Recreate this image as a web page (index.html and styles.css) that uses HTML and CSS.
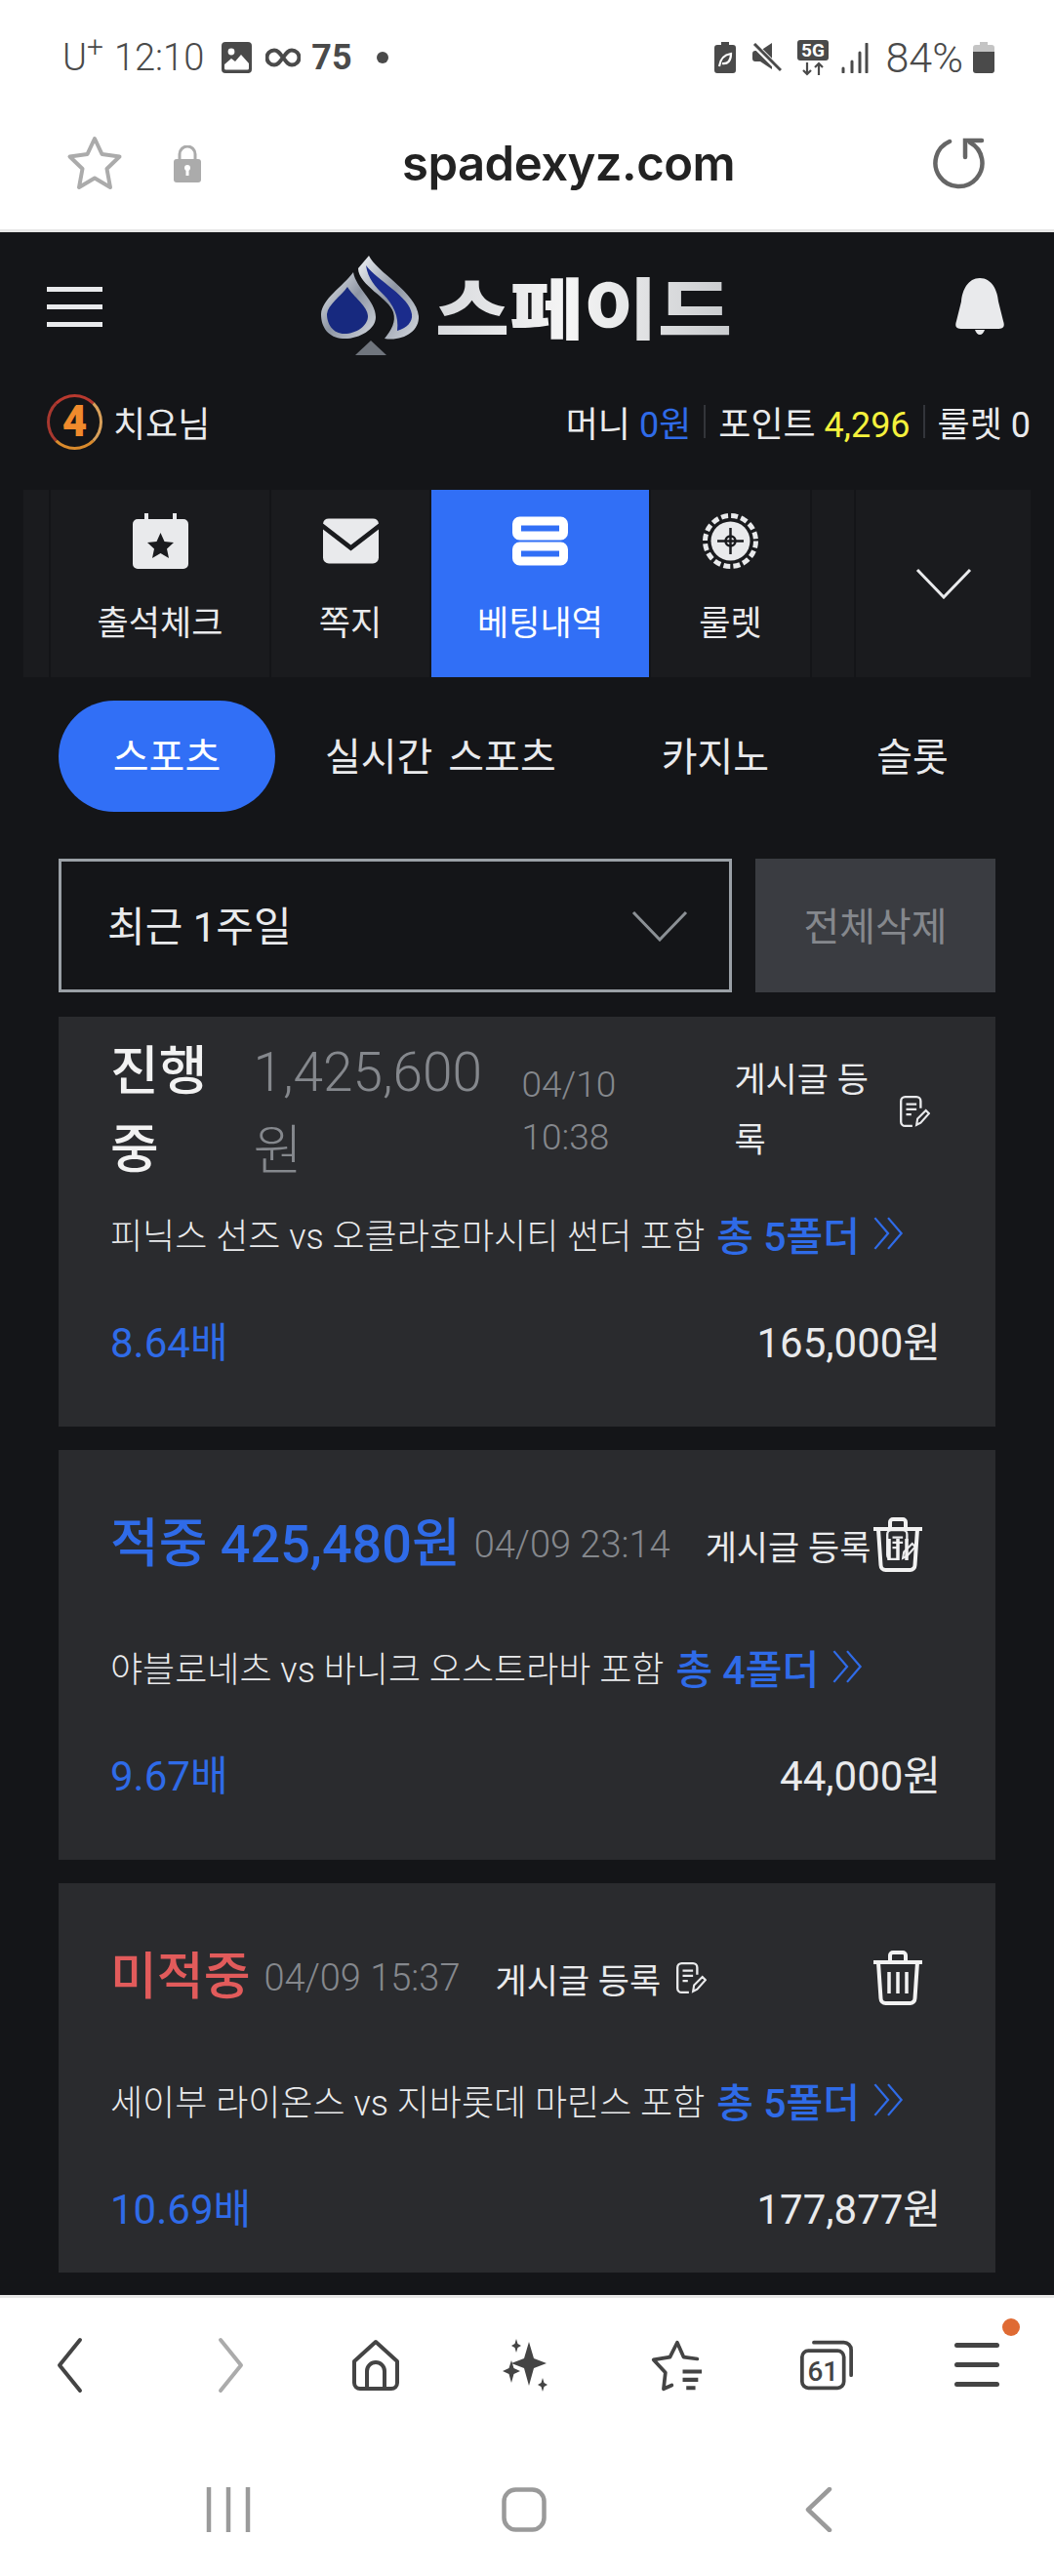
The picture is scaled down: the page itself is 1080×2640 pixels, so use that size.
FILE: index.html
```html
<!DOCTYPE html>
<html lang="ko">
<head>
    <meta charset="UTF-8">
    <meta name="viewport" content="width=device-width, initial-scale=1.0">
    <title>스페이드 베팅내역</title>
    <link rel="stylesheet" href="styles.css">
</head>
<body>
    <div class="status-bar">
        <div class="status-left">
            <span class="carrier">U<sup>+</sup></span>
            <span class="clock">12:10</span>
            <svg class="ic-photo" viewBox="0 0 31 32"><rect width="31" height="32" rx="4" fill="#4a4a4a"/><circle cx="10" cy="10" r="3.4" fill="#fff"/><path d="M3 23l7-6 4 3 6-7 8 9v5a1.5 1.5 0 0 1-1.500 1.500H4.500A1.500 1.500 0 0 1 3 27z" fill="#fff"/></svg>
            <svg class="ic-inf" viewBox="0 0 36 20"><path d="M18 10c-3-4-5-7.500-9-7.500a7.500 7.500 0 0 0 0 15c4 0 6-3.500 9-7.500s5-7.500 9-7.500a7.500 7.500 0 0 1 0 15c-4 0-6-3.500-9-7.500z" fill="none" stroke="#4a4a4a" stroke-width="4"/></svg>
            <b class="temp">75</b>
            <i class="status-dot"></i>
        </div>
        <div class="status-right">
            <svg class="ic-leaf" viewBox="0 0 22 32"><path d="M7 0h8v3h4a3 3 0 0 1 3 3v23a3 3 0 0 1-3 3H3a3 3 0 0 1-3-3V6a3 3 0 0 1 3-3h4z" fill="#4a4a4a"/><path d="M5 25c1-8 5-12 12-13 0 7-3 11-9 10" fill="none" stroke="#fff" stroke-width="2.200"/></svg>
            <svg class="ic-mute" viewBox="0 0 30 30"><path d="M0 11a3 3 0 0 1 3-3h5l12-8v27L8 19H3a3 3 0 0 1-3-3z" fill="#4a4a4a"/><path d="M2 2l27 27" stroke="#fff" stroke-width="6"/><path d="M2 1l27 27" stroke="#4a4a4a" stroke-width="3"/></svg>
            <svg class="ic-5g" viewBox="0 0 32 37"><rect width="32" height="21" rx="3" fill="#4a4a4a"/><text x="16" y="17" text-anchor="middle" class="ic-5g-text">5G</text><path d="M10 23v12M6 31l4 4 4-4M22 36V24M18 28l4-4 4 4" fill="none" stroke="#4a4a4a" stroke-width="2.200"/></svg>
            <svg class="ic-signal" viewBox="0 0 28 31"><path d="M2 26v4M11 19v11M19 10v20M26 1v29" stroke="#4a4a4a" stroke-width="3" stroke-linecap="round"/></svg>
            <span class="battery-text">84%</span>
            <svg class="ic-batt" viewBox="0 0 22 32"><path d="M7 0h8v3h4a3 3 0 0 1 3 3v5H0V6a3 3 0 0 1 3-3h4z" fill="#c4c4c4"/><path d="M0 10h22v19a3 3 0 0 1-3 3H3a3 3 0 0 1-3-3z" fill="#4a4a4a"/></svg>
        </div>
    </div>

    <div class="url-bar">
        <svg class="ic-star" viewBox="0 0 58 58"><path d="M29 3l7.500 16 18 2.500-13 12.500 3.500 19-16-9.500-16 9.500 3.500-19-13-12.500 18-2.500z" fill="none" stroke="#ababab" stroke-width="4" stroke-linejoin="round"/></svg>
        <svg class="ic-lock" viewBox="0 0 28 38"><path d="M6 16V9a8 8 0 0 1 16 0v7" fill="none" stroke="#ababab" stroke-width="3"/><rect y="14" width="28" height="24" rx="3" fill="#ababab"/><circle cx="14" cy="23" r="3" fill="#fff"/><rect x="12.500" y="24" width="3" height="7" fill="#fff"/></svg>
        <span class="url-text">spadexyz.com</span>
        <svg class="ic-reload" viewBox="0 0 54 54"><path d="M17 4a24 24 0 1 0 21 1" fill="none" stroke="#666" stroke-width="4.500" stroke-linecap="round"/><path d="M33 20V3h17" fill="none" stroke="#666" stroke-width="4.500" stroke-linecap="round"/></svg>
    </div>

    <div class="page">
        <header class="site-header">
            <div class="burger"><i></i><i></i><i></i></div>
            <div class="logo">
                <svg class="logo-mark" viewBox="0 0 104 104">
                    <defs>
                        <linearGradient id="steel" x1="0" y1="0" x2="1" y2="1"><stop offset="0" stop-color="#f1f3f6"/><stop offset="0.5" stop-color="#8d95a3"/><stop offset="1" stop-color="#d5d9df"/></linearGradient>
                    </defs>
                    <path d="M51 0C58 16 100 38 102 62C103 78 85 88 67 85C74 76 79 68 76 58C72 44 40 30 40 13Z" fill="url(#steel)"/>
                    <path d="M48 10C60 26 93 42 95 60C96 68 90 74 80 77C82 62 76 50 66 40C58 32 50 24 48 10Z" fill="#1b2c8c"/>
                    <path d="M35 17C38 34 58 46 58 63C58 76 40 86 24 85C10 84 2 74 2 60C3 44 24 32 35 17Z" fill="url(#steel)"/>
                    <path d="M29 32C35 42 50 52 50 62C50 72 38 80 26 80C14 80 8 70 8 60C9 50 22 42 29 32Z" fill="#17297f"/>
                    <path d="M53 87l16 15H37z" fill="#70757d"/>
                </svg>
                <span class="logo-text">스페이드</span>
            </div>
            <svg class="ic-bell" viewBox="0 0 52 58"><path d="M26 0C38 0 44 12 45 24L50 44C52 50 50 52 44 52H8C2 52 0 50 2 44L7 24C8 12 14 0 26 0z" fill="#e9eaec"/><path d="M21 53h10c-1 3-3 5-5 5s-4-2-5-5z" fill="#e9eaec"/></svg>
        </header>

        <div class="user-row">
            <div class="user-name">
                <span class="level"><b>4</b></span>
                <span>치요님</span>
            </div>
            <div class="wallet">
                <span>머니 <em class="blue">0원</em></span>
                <i class="wallet-sep"></i>
                <span>포인트 <em class="yellow">4,296</em></span>
                <i class="wallet-sep"></i>
                <span>룰렛 0</span>
            </div>
        </div>

        <nav class="menu-tabs">
            <div class="menu-tab"></div>
            <div class="menu-tab">
                <svg class="menu-icon" viewBox="0 0 57 57"><path d="M12 0h4v6h25V0h4v6h7a5 5 0 0 1 5 5v41a5 5 0 0 1-5 5H5a5 5 0 0 1-5-5V11a5 5 0 0 1 5-5h7z" fill="#e9eaec"/><path d="M28.500 20l4 9 9.500 1-7 6.500 2 9.500-8.500-5-8.500 5 2-9.500-7-6.500 9.500-1z" fill="#1a1b1e"/></svg>
                <span>출석체크</span>
            </div>
            <div class="menu-tab">
                <svg class="menu-icon" viewBox="0 0 57 46"><path d="M6 0h45a6 6 0 0 1 6 5L28.500 27 0 5a6 6 0 0 1 6-5z" fill="#e9eaec"/><path d="M0 11l28.500 22L57 11v29a6 6 0 0 1-6 6H6a6 6 0 0 1-6-6z" fill="#e9eaec"/></svg>
                <span>쪽지</span>
            </div>
            <div class="menu-tab active">
                <svg class="menu-icon" viewBox="0 0 57 50"><rect x="4.500" y="4.500" width="48" height="15" rx="3" fill="none" stroke="#fff" stroke-width="9"/><rect x="4.500" y="30.500" width="48" height="15" rx="3" fill="none" stroke="#fff" stroke-width="9"/></svg>
                <span>베팅내역</span>
            </div>
            <div class="menu-tab">
                <svg class="menu-icon" viewBox="0 0 57 57"><circle cx="28.500" cy="28.500" r="26" fill="none" stroke="#e9eaec" stroke-width="5" stroke-dasharray="7 3.200"/><circle cx="28.500" cy="28.500" r="20" fill="#e9eaec"/><path d="M28.500 15v27M15 28.500h27" stroke="#1a1b1e" stroke-width="2.500"/><circle cx="28.500" cy="28.500" r="5" fill="none" stroke="#1a1b1e" stroke-width="2.500"/></svg>
                <span>룰렛</span>
            </div>
            <div class="menu-tab"></div>
            <div class="menu-tab more">
                <svg class="chevron" viewBox="0 0 58 32"><path d="M2 2l27 28L56 2" fill="none" stroke="#e9eaec" stroke-width="3"/></svg>
            </div>
        </nav>

        <div class="game-tabs">
            <span class="game-tab active">스포츠</span>
            <span class="game-tab live">실시간 스포츠</span>
            <span class="game-tab casino">카지노</span>
            <span class="game-tab slot">슬롯</span>
        </div>

        <div class="filter-row">
            <div class="period">
                <span>최근 1주일</span>
                <svg class="chevron" viewBox="0 0 58 32"><path d="M2 2l27 28L56 2" fill="none" stroke="#8b9095" stroke-width="3"/></svg>
            </div>
            <div class="delete-all">전체삭제</div>
        </div>

        <div class="bet-list">
            <article class="bet-card">
                <div class="bet-head">
                    <span class="bet-state white">진행<br>중</span>
                    <span class="bet-amount">1,425,600<br>원</span>
                    <span class="bet-date two-line">04/10<br>10:38</span>
                    <span class="bet-post wrapped">게시글 등<br>록</span>
                    <svg class="ic-post" viewBox="1 0 30 32"><use href="#post-icon"/></svg>
                </div>
                <p class="bet-desc">피닉스 선즈 vs 오클라호마시티 썬더 포함 <a class="fold">총 5폴더 <svg class="ic-more" viewBox="0 0 30 30"><use href="#more-icon"/></svg></a></p>
                <div class="bet-foot">
                    <span class="odds">8.64배</span>
                    <span class="stake">165,000원</span>
                </div>
            </article>

            <article class="bet-card">
                <div class="bet-head">
                    <span class="bet-state blue">적중 425,480원</span>
                    <span class="bet-date">04/09 23:14</span>
                    <span class="bet-post">게시글 등록</span>
                    <svg class="ic-post" viewBox="1 0 30 32"><use href="#post-icon"/></svg>
                </div>
                <svg class="ic-trash" viewBox="0 0 54 58"><use href="#trash-icon"/></svg>
                <p class="bet-desc">야블로네츠 vs 바니크 오스트라바 포함 <a class="fold">총 4폴더 <svg class="ic-more" viewBox="0 0 30 30"><use href="#more-icon"/></svg></a></p>
                <div class="bet-foot">
                    <span class="odds">9.67배</span>
                    <span class="stake">44,000원</span>
                </div>
            </article>

            <article class="bet-card last">
                <div class="bet-head">
                    <span class="bet-state red">미적중</span>
                    <span class="bet-date">04/09 15:37</span>
                    <span class="bet-post">게시글 등록</span>
                    <svg class="ic-post" viewBox="1 0 30 32"><use href="#post-icon"/></svg>
                </div>
                <svg class="ic-trash" viewBox="0 0 54 58"><use href="#trash-icon"/></svg>
                <p class="bet-desc">세이부 라이온스 vs 지바롯데 마린스 포함 <a class="fold">총 5폴더 <svg class="ic-more" viewBox="0 0 30 30"><use href="#more-icon"/></svg></a></p>
                <div class="bet-foot">
                    <span class="odds">10.69배</span>
                    <span class="stake">177,877원</span>
                </div>
            </article>
        </div>
    </div>

    <div class="browser-nav">
        <svg viewBox="0 0 54 54"><path d="M36 1L15 27l21 26" transform="translate(-4 0)" fill="none" stroke="#444" stroke-width="4" stroke-linecap="round" stroke-linejoin="round"/></svg>
        <svg viewBox="0 0 54 54"><path d="M18 1l21 26-21 26" transform="translate(4 0)" fill="none" stroke="#ababab" stroke-width="4" stroke-linecap="round" stroke-linejoin="round"/></svg>
        <svg viewBox="0 0 54 54"><path d="M5 23L27 3l22 20v22a6 6 0 0 1-6 6H11a6 6 0 0 1-6-6z" fill="none" stroke="#444" stroke-width="4" stroke-linejoin="round"/><path d="M18 51V33a9 9 0 0 1 18 0v18" fill="none" stroke="#444" stroke-width="4"/></svg>
        <svg viewBox="0 0 54 54"><path d="M30 3l5 17 13 5-13 5-5 18-5-18-13-5 13-5zM12 22l2.500 8 6.500 3-6.500 3-2.500 9-2.500-9-6.500-3 6.500-3zM17 0l1.500 5 3.500 2-3.500 2L17 14l-1.500-5-3.500-2 3.500-2zM44 40l1.500 5 3.500 2-3.500 2-1.500 5-1.500-5-3.500-2 3.500-2z" fill="#444"/></svg>
        <svg viewBox="0 0 58 54"><path d="M24 49l-9 4 2-18L4 21l18-3 8-16 7 16 15 2" fill="none" stroke="#444" stroke-width="4" stroke-linecap="round" stroke-linejoin="round"/><path d="M36 34h21M36 43h17M40 52h10" stroke="#444" stroke-width="4.500"/></svg>
        <svg viewBox="0 0 58 54"><rect x="2" y="11" width="46" height="41" rx="7" fill="none" stroke="#444" stroke-width="4"/><path d="M15 2h33a8 8 0 0 1 8 8v28" fill="none" stroke="#444" stroke-width="4" stroke-linecap="round"/><text x="25" y="44" text-anchor="middle" class="tab-count">61</text></svg>
        <div class="nav-menu">
            <i></i><i></i><i></i>
            <span class="nav-badge"></span>
        </div>
    </div>

    <div class="system-nav">
        <svg viewBox="0 0 46 46"><path d="M3 0v46M23 0v46M43 0v46" stroke="#9a9a9a" stroke-width="4.500"/></svg>
        <svg viewBox="0 0 46 46"><rect x="2.500" y="2.500" width="41" height="41" rx="12" fill="none" stroke="#9a9a9a" stroke-width="4.500"/></svg>
        <svg viewBox="0 0 46 46"><path d="M33 2L11 23l22 21" fill="none" stroke="#9a9a9a" stroke-width="4.500" stroke-linecap="round" stroke-linejoin="round"/></svg>
    </div>

    <svg class="icon-defs">
        <defs>
            <g id="post-icon">
                <path d="M22 13V6a4 4 0 0 0-4-4H7a4 4 0 0 0-4 4v20a4 4 0 0 0 4 4h7" fill="none" stroke="#e9eaec" stroke-width="2.200"/>
                <path d="M8 9h10M8 14h10M8 19h5" stroke="#e9eaec" stroke-width="2.200"/>
                <path d="M18 29l1-6 8-8 3 3-8 9z" fill="none" stroke="#e9eaec" stroke-width="2"/>
            </g>
            <g id="more-icon">
                <path d="M3 1l12 14L3 29M15 1l12 14-12 14" fill="none" stroke="#2f6be8" stroke-width="2"/>
            </g>
            <g id="trash-icon">
                <path d="M2 13h50M19 12V6a3 3 0 0 1 3-3h10a3 3 0 0 1 3 3v6" fill="none" stroke="#f2f2f2" stroke-width="4"/>
                <path d="M7 13l2.500 37a5 5 0 0 0 5 5h25a5 5 0 0 0 5-5L47 13" fill="none" stroke="#f2f2f2" stroke-width="4"/>
                <path d="M18 23v22M27 23v22M36 23v22" stroke="#f2f2f2" stroke-width="3.500"/>
            </g>
        </defs>
    </svg>
</body>
</html>
```

FILE: styles.css
```css
* {
    box-sizing: border-box;
}
body {
    margin: 0;
    width: 1080px;
    height: 2640px;
    overflow: hidden;
    background-color: #fff;
    color: #e9eaec;
    font-family: Roboto, "Noto Sans CJK KR", sans-serif;
}
em {
    font-style: normal;
}

/* phone status bar */
.status-bar {
    height: 112px;
    padding: 6px 61px 0 64px;
    display: flex;
    justify-content: space-between;
    align-items: center;
    color: #4a4a4a;
    font-size: 38px;
    font-weight: 300;
}
.status-left,
.status-right {
    display: flex;
    align-items: center;
}
.carrier sup {
    font-size: 30px;
    line-height: 0;
}
.clock {
    margin-left: 11px;
}
.ic-photo {
    width: 31px;
    height: 32px;
    margin-left: 18px;
}
.ic-inf {
    width: 36px;
    height: 20px;
    margin-left: 14px;
}
.temp {
    margin-left: 11px;
    font-size: 36px;
    font-weight: 700;
}
.status-dot {
    width: 12px;
    height: 12px;
    margin-left: 25px;
    border-radius: 50%;
    background-color: #4a4a4a;
}
.ic-leaf {
    width: 22px;
    height: 32px;
}
.ic-mute {
    width: 30px;
    height: 30px;
    margin-left: 17px;
}
.ic-5g {
    width: 32px;
    height: 37px;
    margin-left: 16px;
}
.ic-5g-text {
    font-size: 19px;
    font-weight: 700;
    fill: #fff;
}
.ic-signal {
    width: 28px;
    height: 31px;
    margin-left: 13px;
}
.battery-text {
    margin-left: 18px;
    font-size: 43px;
}
.ic-batt {
    width: 22px;
    height: 32px;
    margin-left: 10px;
}

/* browser address bar */
.url-bar {
    height: 126px;
    padding: 0 70px 12px 68px;
    display: flex;
    align-items: center;
    border-bottom: 3px solid #e6e6e6;
    color: #222;
}
.ic-star {
    width: 58px;
    height: 58px;
}
.ic-lock {
    width: 28px;
    height: 38px;
    margin-left: 52px;
}
.url-text {
    margin-left: 206px;
    font-family: Inter, sans-serif;
    font-size: 49px;
    font-weight: 600;
    letter-spacing: -0.5px;
}
.ic-reload {
    width: 54px;
    height: 54px;
    margin-left: auto;
}

/* site */
.page {
    height: 2114px;
    background-color: #141518;
    overflow: hidden;
}
.site-header {
    height: 152px;
    padding: 0 50px 0 48px;
    display: flex;
    align-items: center;
    justify-content: space-between;
}
.burger {
    width: 57px;
    display: flex;
    flex-direction: column;
    gap: 13px;
}
.burger i {
    height: 5px;
    background-color: #e9eaec;
}
.logo {
    width: 424px;
    margin-right: 6px;
    display: flex;
    align-items: center;
    gap: 15px;
}
.logo-mark {
    width: 104px;
    height: 104px;
}
.logo-text {
    font-family: "Noto Sans CJK KR", sans-serif;
    font-size: 70px;
    font-weight: 900;
    line-height: 1;
    white-space: nowrap;
    transform: scaleX(1.18);
    transform-origin: left center;
    background: linear-gradient(90deg, #d8dadd, #f5f5f5 45%, #c9cbce);
    -webkit-background-clip: text;
    background-clip: text;
    color: transparent;
}
.ic-bell {
    width: 52px;
    height: 58px;
}
.user-row {
    height: 84px;
    padding: 0 24px 0 48px;
    display: flex;
    align-items: center;
    justify-content: space-between;
    font-size: 36px;
}
.user-name {
    display: flex;
    align-items: center;
    gap: 11px;
}
.level {
    width: 57px;
    height: 57px;
    display: flex;
    align-items: center;
    justify-content: center;
    border: 3px solid;
    border-color: #b8392f #d9a05a #d98a2c #a8382f;
    border-radius: 50%;
    color: #f08a2c;
    font-size: 44px;
    font-weight: 900;
}
.wallet {
    display: flex;
    align-items: center;
    gap: 13px;
}
.wallet-sep {
    width: 2px;
    height: 34px;
    background-color: #33353a;
}
.blue {
    color: #2f6be8;
}
.yellow {
    color: #f4f13c;
}
.white {
    color: #f2f2f2;
}
.red {
    color: #e25b5b;
}

.menu-tabs {
    height: 192px;
    margin: 28px 24px 0;
    display: grid;
    grid-template-columns: 26px 224px 162px 223px 163px 43px 179px;
    gap: 2px;
}
.menu-tab {
    padding-top: 24px;
    display: flex;
    flex-direction: column;
    align-items: center;
    background-color: #1a1b1e;
    font-size: 35px;
    line-height: 50px;
}
.menu-tab.active {
    background-color: #316ff6;
    color: #fff;
}
.menu-tab.more {
    padding-top: 0;
    justify-content: center;
}
.menu-icon {
    width: 57px;
    height: 57px;
    margin-bottom: 32px;
}
.chevron {
    width: 58px;
    height: 32px;
}

.game-tabs {
    height: 114px;
    margin: 24px 0 0 60px;
    display: flex;
    align-items: center;
    font-size: 40px;
}
.game-tab {
    padding-bottom: 5px;
}
.game-tab.active {
    width: 222px;
    height: 114px;
    display: flex;
    align-items: center;
    justify-content: center;
    border-radius: 57px;
    background-color: #316ff6;
    color: #fff;
}
.game-tab.live {
    margin-left: 51px;
    word-spacing: 6px;
}
.game-tab.casino {
    margin-left: 108px;
}
.game-tab.slot {
    margin-left: 110px;
}

.filter-row {
    height: 137px;
    margin: 48px 60px 0;
    display: flex;
    gap: 24px;
}
.period {
    width: 690px;
    padding: 0 42px 4px 47px;
    display: flex;
    align-items: center;
    justify-content: space-between;
    border: 3px solid #9aa0a6;
    font-size: 42px;
}
.period .chevron {
    margin-top: 4px;
}
.delete-all {
    width: 246px;
    padding-bottom: 3px;
    display: flex;
    align-items: center;
    justify-content: center;
    background-color: #3a3c41;
    color: #85888d;
    font-size: 40px;
}

.bet-list {
    margin: 25px 60px 0;
    display: flex;
    flex-direction: column;
    gap: 24px;
}
.bet-card {
    position: relative;
    height: 420px;
    padding: 0 56px 0 53px;
    background-color: #2a2b2e;
}
.bet-card.last {
    height: 399px;
}
.bet-head {
    height: 194px;
    display: flex;
    align-items: center;
}
.bet-state {
    font-size: 54px;
    font-weight: 500;
    line-height: 80px;
    white-space: nowrap;
}
.bet-state.red {
    font-size: 52px;
}
.bet-amount {
    width: 240px;
    margin-left: 47px;
    color: #85888d;
    font-size: 55px;
    font-weight: 300;
    line-height: 80px;
}
.bet-date {
    margin-left: 14px;
    color: #85888d;
    font-size: 38px;
    font-weight: 300;
    white-space: nowrap;
}
.bet-date.two-line {
    width: 150px;
    margin-left: 35px;
    font-size: 37px;
    line-height: 54px;
}
.bet-post {
    margin-left: 36px;
    font-size: 35px;
    white-space: nowrap;
}
.bet-post.wrapped {
    width: 154px;
    margin-left: 68px;
    line-height: 62px;
}
.ic-post {
    width: 32px;
    height: 34px;
    margin-left: 15px;
}
.ic-trash {
    position: absolute;
    top: 68px;
    right: 73px;
    width: 54px;
    height: 58px;
}
.bet-desc {
    height: 56px;
    margin: 0;
    display: flex;
    align-items: center;
    gap: 12px;
    font-size: 36px;
    font-weight: 300;
    white-space: nowrap;
}
.fold {
    display: flex;
    align-items: center;
    gap: 12px;
    color: #2f6be8;
    font-size: 41px;
    font-weight: 500;
}
.ic-more {
    width: 34px;
    height: 34px;
}
.bet-foot {
    height: 56px;
    margin-top: 52px;
    display: flex;
    align-items: center;
    justify-content: space-between;
    font-size: 42px;
}
.odds {
    color: #2f6be8;
}

/* browser bottom bar */
.browser-nav {
    height: 134px;
    padding-top: 6px;
    border-top: 3px solid #e6e6e6;
    display: grid;
    grid-template-columns: repeat(7, 154px);
    justify-items: center;
    align-items: center;
}
.browser-nav svg {
    width: 54px;
    height: 54px;
    overflow: visible;
}
.tab-count {
    font-size: 30px;
    font-weight: 500;
    fill: #444;
}
.nav-menu {
    position: relative;
    width: 46px;
    display: flex;
    flex-direction: column;
    gap: 15px;
}
.nav-menu i {
    height: 5px;
    border-radius: 3px;
    background-color: #444;
}
.nav-badge {
    position: absolute;
    top: -25px;
    right: -21px;
    width: 18px;
    height: 18px;
    border-radius: 50%;
    background-color: #df6a33;
}
.system-nav {
    height: 164px;
    padding: 0 0 55px 82px;
    display: grid;
    grid-template-columns: repeat(3, 303px);
    justify-items: center;
    align-items: end;
}
.system-nav svg {
    width: 46px;
    height: 46px;
}
.icon-defs {
    position: absolute;
    width: 0;
    height: 0;
}
```
